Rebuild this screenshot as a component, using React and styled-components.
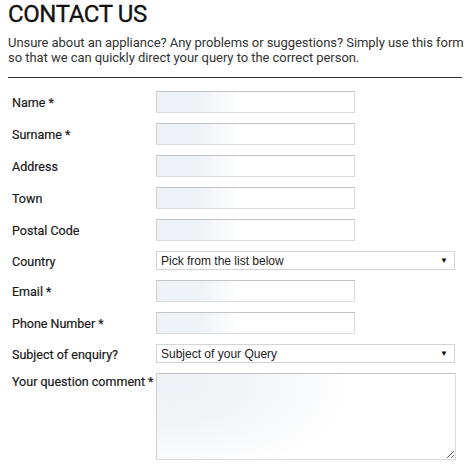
import styled, { createGlobalStyle } from "styled-components";

const GlobalStyle = createGlobalStyle`
  body {
    margin: 0;
    background: #fff;
  }
`;

const fields = [
  { label: "Name *", type: "input" },
  { label: "Surname *", type: "input" },
  { label: "Address", type: "input" },
  { label: "Town", type: "input" },
  { label: "Postal Code", type: "input" },
  { label: "Country", type: "select", placeholder: "Pick from the list below" },
  { label: "Email *", type: "input" },
  { label: "Phone Number *", type: "input" },
  { label: "Subject of enquiry?", type: "select", placeholder: "Subject of your Query" },
  { label: "Your question comment *", type: "textarea" },
];

const App = () => {
  return (
    <Page>
      <GlobalStyle />
      <Title>CONTACT US</Title>
      <Intro>
        Unsure about an appliance? Any problems or suggestions? Simply use this form
        <br />
        so that we can quickly direct your query to the correct person.
      </Intro>
      <Divider />
      <Form>
        {fields.map((field) => (
          <Row key={field.label} $top={field.type === "textarea"}>
            <Label>{field.label}</Label>
            {field.type === "input" && <TextInput type="text" />}
            {field.type === "select" && (
              <Select>
                <span>{field.placeholder}</span>
                <Arrow>▼</Arrow>
              </Select>
            )}
            {field.type === "textarea" && <TextArea />}
          </Row>
        ))}
      </Form>
    </Page>
  );
};

export default App;

const Page = styled.div`
  padding: 0 8px;
  font-family: Roboto, "Liberation Sans", sans-serif;
  color: #222;
`;

const Title = styled.h1`
  margin: 0;
  padding-top: 1px;
  font-size: 24px;
  font-weight: 400;
  line-height: 26px;
  color: #111;
  letter-spacing: -0.4px;
  -webkit-text-stroke: 0.3px #111;
`;

const Intro = styled.p`
  margin: 8px 0 0;
  font-size: 13px;
  line-height: 15px;
  color: #333;
  white-space: nowrap;
  letter-spacing: -0.05px;
`;

const Divider = styled.hr`
  margin: 12px 4px 0 0;
  border: 0;
  border-top: 1px solid #333;
`;

const Form = styled.div`
  display: flex;
  flex-direction: column;
  gap: 10px;
  padding: 13px 0 0 4px;
`;

const Row = styled.div`
  display: grid;
  grid-template-columns: 144px 1fr;
  align-items: ${(p) => (p.$top ? "start" : "center")};
`;

const Label = styled.label`
  font-size: 12.5px;
  font-weight: 400;
  letter-spacing: 0;
  white-space: nowrap;
  color: #1a1a1a;
  padding-top: 1px;
  -webkit-text-stroke: 0.2px #1a1a1a;
`;

const TextInput = styled.input`
  box-sizing: border-box;
  width: 199px;
  height: 22px;
  margin: 0;
  border: 1px solid #dcdcdc;
  border-top-color: #c4c4c4;
  border-left-color: #cfcfcf;
  background: linear-gradient(to right, #eef2f6 0, #eff2f6 22%, #ffffff 42%);
  outline: none;
`;

const Select = styled.div`
  box-sizing: border-box;
  width: 299px;
  height: 19px;
  display: flex;
  align-items: center;
  justify-content: space-between;
  padding: 0 6px 0 4px;
  border: 1px solid #d4d4d4;
  background: #fff;
  font-family: "Liberation Sans", Arial, sans-serif;
  font-size: 12px;
  color: #222;
`;

const Arrow = styled.span`
  font-size: 8px;
  color: #111;
`;

const TextArea = styled.textarea`
  box-sizing: border-box;
  width: 300px;
  height: 87px;
  margin: 0;
  border: 1px solid #dcdcdc;
  border-top-color: #c4c4c4;
  border-left-color: #cfcfcf;
  background: radial-gradient(ellipse 180px 90px at 5% 15%, #eef2f6 0, #f2f4f7 40%, #ffffff 100%);
  outline: none;
`;
